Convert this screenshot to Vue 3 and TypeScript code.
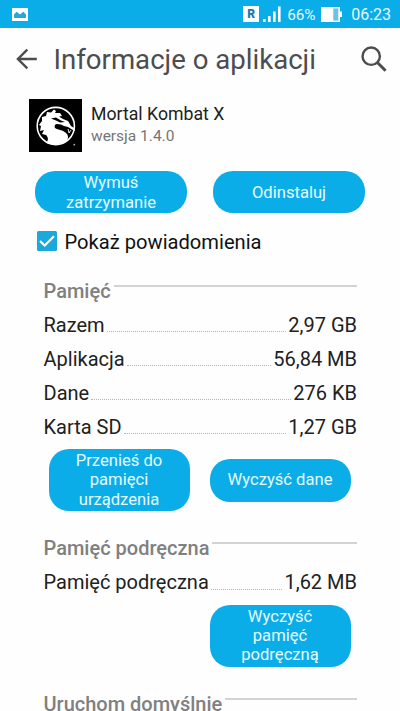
<template>
  <div class="screen">
    <header class="status-bar">
      <svg class="picture-icon" viewBox="0 0 16 13">
        <rect width="16" height="13" rx="0.6" fill="#fff" />
        <path d="M2 10V6.4L4.6 3.8 6.5 5.2 8 6.4 9.4 5.2 11.3 3.8 14 6.4V10Z" fill="#2ba6d6" />
      </svg>
      <div class="status-right">
        <span class="roaming">R</span>
        <svg class="signal" viewBox="0 0 18 16" fill="#fff">
          <rect x="0" y="13" width="2.6" height="3" />
          <rect x="5" y="10" width="2.6" height="6" />
          <rect x="10" y="5.5" width="2.6" height="10.5" />
          <rect x="15" y="0.5" width="2.6" height="15.5" />
        </svg>
        <span class="percent">66%</span>
        <svg class="battery" viewBox="0 0 21 15">
          <path d="M0 0H19V4.5H21V10H19V15H0Z" fill="#fff" />
          <rect x="12.3" y="1.4" width="5" height="12.2" fill="#6fc0e2" />
        </svg>
        <span class="clock">06:23</span>
      </div>
    </header>

    <div class="toolbar">
      <svg class="back" viewBox="0 0 22 22" fill="none" stroke="#4d4d4d" stroke-width="2.4">
        <path d="M20.8 11H2.2M11.3 1.6L1.9 11L11.3 20.4" />
      </svg>
      <h1>Informacje o aplikacji</h1>
      <svg class="search" viewBox="0 0 26 26" fill="none" stroke="#4d4d4d">
        <circle cx="10.2" cy="10.2" r="8.7" stroke-width="2.4" />
        <path d="M16.4 16.5L24.6 24.8" stroke-width="3" />
      </svg>
    </div>

    <main>
      <section class="app-head">
        <svg class="app-icon" viewBox="0 0 53 53">
          <rect width="53" height="53" fill="#000" />
          <circle cx="26.8" cy="27" r="18.6" fill="none" stroke="#fff" stroke-width="1.6" />
          <path
            d="M17 44C20 41 19 38 17 36L13 35L15 31L11 32L12 27L10 26L13 22L13 18L17 17L18 13L22 13.5L25 10.5L27 12L26 14L31 14L33 17L30 17.5L34 20L39 22L42 27L45 29L46 32L43 30.5L39 28L35 27L32 25.5L28 25C26 25 25 27 26 29C29 31 35 31 38 35C40 38 39 42 35 43.5C29 46 22 46 17 44Z"
            fill="#fff"
          />
          <path d="M22 19.5L27 18.5L32 21.5L36 23L31 23.5L27 21.5Z" fill="#000" />
          <path d="M39 30L40 34L42 31" fill="none" stroke="#fff" stroke-width="0.9" />
          <circle cx="45.3" cy="45.7" r="0.9" fill="#aaa" />
        </svg>
        <div class="app-text">
          <div class="app-name">Mortal Kombat X</div>
          <div class="app-version">wersja 1.4.0</div>
        </div>
      </section>

      <div class="actions">
        <button>Wymuś<br />zatrzymanie</button>
        <button>Odinstaluj</button>
      </div>

      <label class="notify">
        <svg class="check" viewBox="0 0 20 20" @click="notify = !notify">
          <rect width="20" height="20" rx="1.5" fill="#1ba9dd" />
          <path v-if="notify" d="M3 10L7.7 14.6L17 5.2" fill="none" stroke="#fff" stroke-width="2.1" />
        </svg>
        <span>Pokaż powiadomienia</span>
      </label>

      <section v-for="group in groups" :key="group.title" class="group">
        <h2>{{ group.title }}</h2>
        <div v-for="row in group.rows" :key="row.label" class="row">
          <span>{{ row.label }}</span>
          <i class="dots"></i>
          <span>{{ row.value }}</span>
        </div>
        <div v-if="group.buttons.length" class="group-actions">
          <button v-for="label in group.buttons" :key="label">{{ label }}</button>
        </div>
      </section>
    </main>
  </div>
</template>

<script setup lang="ts">
import { ref } from 'vue'

interface Row {
  label: string
  value: string
}

interface Group {
  title: string
  rows: Row[]
  buttons: string[]
}

const notify = ref(true)

const groups: Group[] = [
  {
    title: 'Pamięć',
    rows: [
      { label: 'Razem', value: '2,97 GB' },
      { label: 'Aplikacja', value: '56,84 MB' },
      { label: 'Dane', value: '276 KB' },
      { label: 'Karta SD', value: '1,27 GB' }
    ],
    buttons: ['Przenieś do\npamięci\nurządzenia', 'Wyczyść dane']
  },
  {
    title: 'Pamięć podręczna',
    rows: [{ label: 'Pamięć podręczna', value: '1,62 MB' }],
    buttons: ['Wyczyść\npamięć\npodręczną']
  },
  { title: 'Uruchom domyślnie', rows: [], buttons: [] }
]
</script>

<style>
body {
  margin: 0;
  background: #fefefe;
}
</style>

<style scoped>
.screen {
  width: 400px;
  height: 711px;
  overflow: hidden;
  background: #fefefe;
  color: #212121;
  font-family: Roboto, "Liberation Sans", sans-serif;
}

.status-bar {
  display: flex;
  align-items: center;
  justify-content: space-between;
  box-sizing: border-box;
  height: 28px;
  padding: 0 9px 0 12px;
  background: #0bade9;
  color: #e6f8ff;
}

.picture-icon {
  width: 16px;
  height: 13px;
}

.status-right {
  display: flex;
  align-items: center;
  font-size: 16px;
  line-height: 28px;
}

.roaming {
  width: 16px;
  height: 16px;
  margin-right: 4px;
  background: #fff;
  color: #167da6;
  font-size: 12px;
  font-weight: 900;
  line-height: 16px;
  text-align: center;
}

.signal {
  width: 18px;
  height: 16px;
  margin-right: 6px;
}

.percent {
  width: 29px;
  margin-right: 5px;
  padding-top: 1px;
  font-size: 15.3px;
  white-space: nowrap;
}

.battery {
  width: 21px;
  height: 15px;
  margin-right: 9px;
}

.clock {
  padding-top: 2px;
}

.toolbar {
  display: flex;
  align-items: center;
  height: 62px;
  padding: 0 13px 0 16px;
  color: #4d4d4d;
}

.back {
  width: 22px;
  height: 22px;
  margin-right: 15.5px;
}

.toolbar h1 {
  flex: 1;
  margin: 2px 0 0;
  font-size: 27.6px;
  font-weight: 400;
  line-height: 32px;
  white-space: nowrap;
}

.search {
  width: 26px;
  height: 26px;
}

.app-head {
  display: flex;
  height: 53px;
  margin: 9px 0 0 29px;
}

.app-icon {
  width: 53px;
  height: 53px;
  margin-right: 9px;
}

.app-text {
  padding-top: 4px;
}

.app-name {
  font-size: 17.7px;
  line-height: 22px;
}

.app-version {
  color: #757575;
  font-size: 15.5px;
  line-height: 23px;
}

button {
  padding: 0;
  border: 0;
  background: #0bade9;
  color: #e6fbff;
  font-family: inherit;
  font-size: 16.6px;
  line-height: 19.4px;
  white-space: pre-line;
}

.actions {
  display: flex;
  gap: 26px;
  margin: 19px 35px 0;
}

.actions button {
  width: 152px;
  height: 42px;
  padding-top: 1px;
  border-radius: 20px;
}

.notify {
  display: flex;
  align-items: center;
  height: 20px;
  margin: 18px 0 0 36.5px;
  color: #111;
  font-size: 20.15px;
}

.notify span {
  padding-top: 2px;
}

.check {
  width: 20px;
  height: 20px;
  margin-right: 8px;
}

.group {
  width: 313.5px;
  margin: 28px 0 0 43.5px;
}

.group + .group {
  margin-top: 25px;
}

h2 {
  display: flex;
  margin: 0;
  color: #808080;
  font-size: 20px;
  font-weight: 500;
  line-height: 24px;
  white-space: nowrap;
}

h2::after {
  content: "";
  flex: 1;
  height: 2px;
  margin: 6px 0 0 3px;
  background: #d3d3d3;
}

.row {
  display: flex;
  align-items: flex-end;
  height: 33.9px;
  font-size: 20px;
  line-height: 24px;
}

.dots {
  flex: 1;
  margin: 0 2px 4.5px;
  border-bottom: 1px dotted #b5b5b5;
}

.group-actions {
  display: flex;
  align-items: center;
  justify-content: flex-end;
  gap: 20px;
  margin: 10.5px 6.5px 0 0;
}

.group-actions button {
  width: 141px;
  min-height: 43px;
  padding: 2px 0;
  border-radius: 20px;
}
</style>
